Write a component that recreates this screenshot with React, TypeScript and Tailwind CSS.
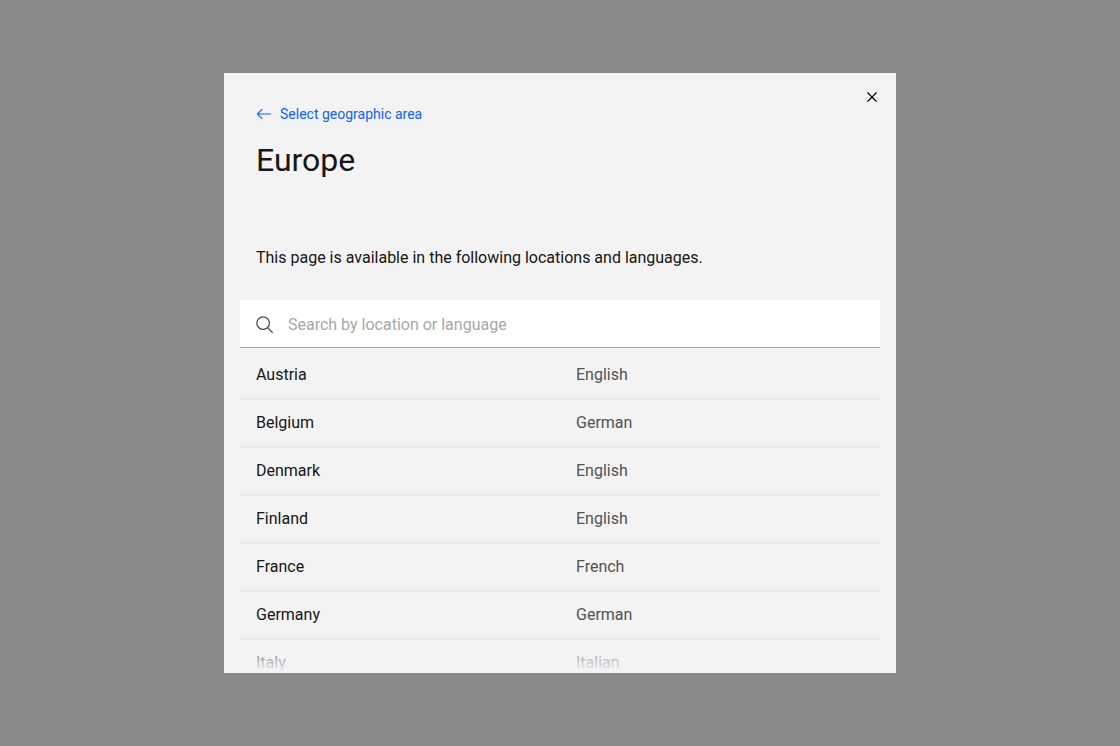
const locations = [
  { name: "Austria", language: "English" },
  { name: "Belgium", language: "German" },
  { name: "Denmark", language: "English" },
  { name: "Finland", language: "English" },
  { name: "France", language: "French" },
  { name: "Germany", language: "German" },
  { name: "Italy", language: "Italian" },
];

function ArrowLeftIcon() {
  return (
    <svg className="size-4" viewBox="0 0 16 16" fill="none" stroke="currentColor" strokeWidth="1.1" aria-hidden="true">
      <path d="M6.2 3.2 1.4 8l4.8 4.8M1.4 8H15" />
    </svg>
  );
}

function CloseIcon() {
  return (
    <svg className="size-5" viewBox="0 0 32 32" fill="currentColor" aria-hidden="true">
      <path d="M24 9.4 22.6 8 16 14.6 9.4 8 8 9.4l6.6 6.6L8 22.6 9.4 24l6.6-6.6 6.6 6.6 1.4-1.4-6.6-6.6L24 9.4z" />
    </svg>
  );
}

function SearchIcon() {
  return (
    <svg className="size-5" viewBox="0 0 32 32" fill="currentColor" aria-hidden="true">
      <path d="M29 27.586l-7.552-7.552a11.018 11.018 0 1 0-1.414 1.414L27.586 29zM4 13a9 9 0 1 1 9 9 9.01 9.01 0 0 1-9-9z" />
    </svg>
  );
}

export default function App() {
  return (
    <div className="flex min-h-screen items-center justify-center bg-[#8a8a8a] font-[Roboto,sans-serif] text-base text-[#161616]">
      <div
        role="dialog"
        aria-modal="true"
        aria-labelledby="locale-title"
        className="relative flex max-h-[600px] w-3/5 min-w-80 flex-col overflow-hidden bg-[#f3f3f3]"
      >
        <header className="flex items-start justify-between pl-8">
          <div className="pt-8">
            <button type="button" className="flex items-center gap-2 text-sm leading-[18px] text-[#0f62fe]">
              <ArrowLeftIcon />
              Select geographic area
            </button>
            <h2 id="locale-title" className="mt-[17px] text-[32px] leading-10">
              Europe
            </h2>
          </div>
          <button type="button" aria-label="Close" className="flex size-12 items-center justify-center text-black">
            <CloseIcon />
          </button>
        </header>

        <p className="px-8 pt-[66px] leading-6">This page is available in the following locations and languages.</p>

        <div className="px-4 pt-[30px]">
          <label className="flex h-12 items-center gap-[13px] border-b border-[#a8a8a8] bg-white px-[15px] pt-[2px] text-[#525252]">
            <SearchIcon />
            <input
              type="search"
              aria-label="Search by location or language"
              placeholder="Search by location or language"
              className="min-w-0 flex-1 bg-transparent text-[#161616] outline-none placeholder:text-[#a8a8a8]"
            />
          </label>
        </div>

        <ul className="min-h-0 overflow-hidden px-4 pt-1">
          {locations.map((item) => (
            <li key={item.name}>
              <a href="#" className="grid h-12 grid-cols-2 items-center border-b-2 border-[#e8e8e8]">
                <span className="pl-4">{item.name}</span>
                <span className="pl-4 text-[#525252]">{item.language}</span>
              </a>
            </li>
          ))}
        </ul>

        <div className="pointer-events-none absolute inset-x-0 bottom-0 h-10 bg-linear-to-b from-[#f3f3f3]/0 to-[#f3f3f3]" />
      </div>
    </div>
  );
}
